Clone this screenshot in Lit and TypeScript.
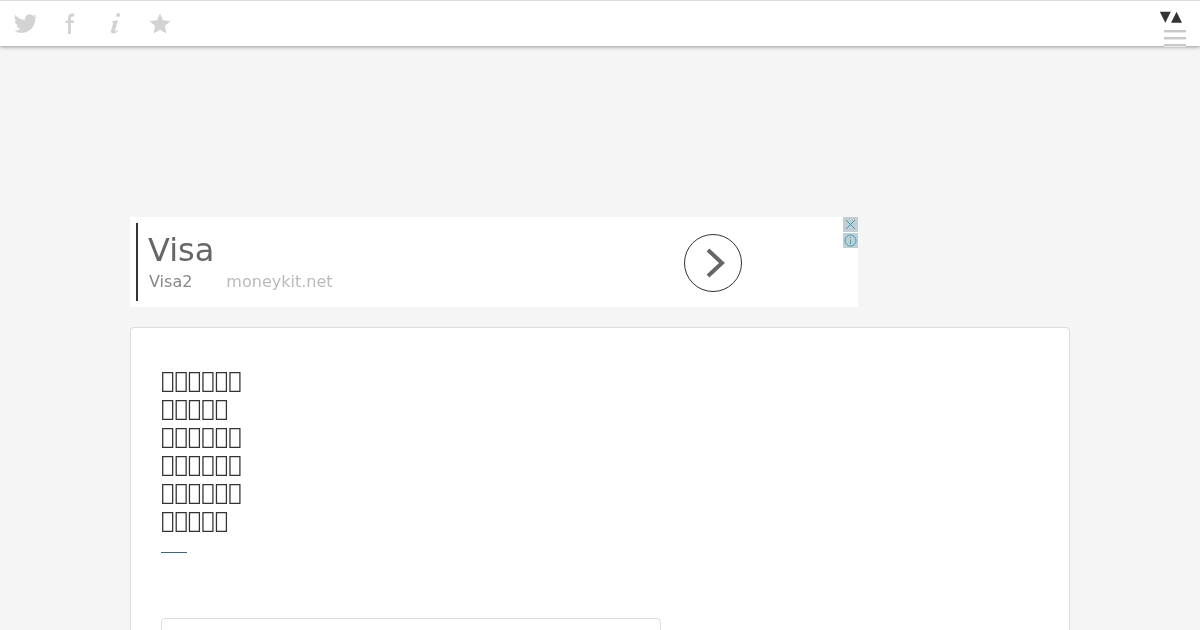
import {LitElement, html, css} from 'lit';
import {customElement} from 'lit/decorators.js';

// glyphs the font has no shape for, they draw as empty boxes like the reference
const TITLE_LINES = [
    '\uE100\uE101\uE102\uE103\uE104\uE105',
    '\uE106\uE107\uE108\uE109\uE10A',
    '\uE10B\uE10C\uE10D\uE10E\uE10F\uE110',
    '\uE111\uE112\uE113\uE114\uE115\uE116',
    '\uE117\uE118\uE119\uE11A\uE11B\uE11C',
    '\uE11D\uE11E\uE11F\uE120\uE121',
];

@customElement('app-root')
export class AppRoot extends LitElement {
    static styles = css`
        :host {
            display: block;
            height: 630px;
            overflow: hidden;
            background: #f5f5f5;
            font-family: "DejaVu Sans", sans-serif;
        }

        .topbar {
            height: 45px;
            background: #fff;
            border-top: 1px solid #ddd;
            box-shadow: 0 1px 4px rgba(0, 0, 0, 0.4);
            display: flex;
            justify-content: space-between;
            padding: 0 14px;
        }

        .social {
            display: flex;
            align-items: center;
            gap: 22px;
        }

        .social svg {
            width: 23px;
            height: 23px;
            fill: #d3d3d3;
            display: block;
        }

        .menu {
            width: 26px;
            display: flex;
            flex-direction: column;
            align-items: flex-end;
        }

        .arrows {
            font-size: 14.4px;
            line-height: 12px;
            margin-top: 9px;
            margin-right: 4px;
            color: #333;
            white-space: nowrap;
            filter: grayscale(1);
        }

        .burger {
            width: 22px;
            height: 2px;
            margin-top: 5px;
            background: #c8c8c8;
            box-shadow: 0 1px 0 #e8e8e8;
        }

        .burger.first {
            margin-top: 8px;
        }

        .page {
            width: 940px;
            margin: 171px auto 0;
        }

        .ad {
            position: relative;
            width: 716px;
            height: 78px;
            padding: 6px;
            background: #fff;
            display: flex;
            justify-content: space-between;
            align-items: center;
        }

        .ad-text {
            height: 78px;
            border-left: 2px solid #333;
            padding-left: 10px;
            box-sizing: border-box;
            filter: grayscale(1);
        }

        .ad-title {
            font-size: 32px;
            line-height: 38px;
            margin-top: 8px;
            color: #666;
        }

        .ad-sub {
            display: flex;
            gap: 34px;
            font-size: 16px;
            line-height: 20px;
            margin-top: 3px;
            margin-left: 1px;
            color: #888;
        }

        .ad-url {
            color: #bbb;
        }

        .ad-go {
            margin-right: 110px;
            margin-top: 2px;
            width: 56px;
            height: 56px;
            border: 1px solid #333;
            border-radius: 50%;
            display: flex;
            align-items: center;
            justify-content: center;
        }

        .ad-badges {
            position: absolute;
            top: 0;
            right: 0;
            display: flex;
            flex-direction: column;
            gap: 1px;
        }

        .ad-badges svg {
            width: 15px;
            height: 15px;
            display: block;
            background: #c3ced3;
        }

        .card {
            margin-top: 20px;
            height: 400px;
            box-sizing: border-box;
            background: #fff;
            border: 1px solid #ddd;
            border-radius: 4px;
            padding: 38px 30px 0;
        }

        .title {
            font-size: 22.4px;
            line-height: 28px;
            font-weight: normal;
            margin: 0;
            color: #333;
            filter: grayscale(1);
        }

        .rule {
            width: 26px;
            height: 1px;
            margin-top: 18px;
            background: #2b6a9e;
        }

        .box {
            width: 498px;
            height: 100px;
            margin-top: 65px;
            border: 1px solid #ddd;
            border-radius: 4px;
        }
    `;

    render() {
        return html`
        <div class="topbar">
            <div class="social">
                <svg viewBox="0 0 24 24"><path d="M23.600 4.600c-.9.4-1.800.6-2.800.8 1-.6 1.800-1.500 2.100-2.700-.9.6-2 1-3.100 1.200a4.900 4.900 0 0 0-8.300 4.500C7.500 8.200 3.900 6.200 1.500 3.200a4.900 4.900 0 0 0 1.500 6.500c-.8 0-1.600-.2-2.200-.6 0 2.400 1.700 4.400 3.900 4.900-.7.2-1.500.2-2.200.1.6 1.900 2.400 3.300 4.600 3.400A9.900 9.900 0 0 1 .4 19.500 14 14 0 0 0 22 7c1-.7 1.900-1.500 1.600-2.400z"/></svg>
                <svg viewBox="0 0 23 23"><path d="M13 1.500c1 0 1.800.1 2.400.3v2.900c-.6-.2-1.200-.3-1.800-.3-1.200 0-1.700.7-1.700 2v2h3v2.700h-3V22H9V11.100H6.500V8.400H9V6.400C9 3.200 10.400 1.500 13 1.500z"/></svg>
                <svg viewBox="0 0 23 23"><path d="M14.200 1a2 2 0 1 1 0 4 2 2 0 0 1 0-4zM8.500 9l5.400-.8-2.800 10.400c-.2.700.3.900.8.500l1.500-1.400.6.700c-1.300 1.900-3 3.100-4.900 3.100-1.700 0-2.400-1.100-2-2.900l2-7.300c.2-.7-.2-1-1-1.100z"/></svg>
                <svg viewBox="0 0 24 24"><path d="M11.500 1.500l3.200 7.200 7.800.8-5.900 5.200 1.700 7.700-6.800-4-6.800 4 1.700-7.700L.5 9.500l7.800-.8z"/></svg>
            </div>
            <div class="menu">
                <div class="arrows">▼▲</div>
                <div class="burger first"></div>
                <div class="burger"></div>
                <div class="burger"></div>
            </div>
        </div>
        <div class="page">
            <div class="ad">
                <div class="ad-text">
                    <div class="ad-title">Visa</div>
                    <div class="ad-sub"><span>Visa2</span><span class="ad-url">moneykit.net</span></div>
                </div>
                <div class="ad-go">
                    <svg width="24" height="32" viewBox="0 0 24 32"><path d="M7 3l14 13L7 29" fill="none" stroke="#666" stroke-width="4"/></svg>
                </div>
                <div class="ad-badges">
                    <svg viewBox="0 0 15 15"><path d="M3 3l9 9M12 3l-9 9" stroke="#2aa5c0" fill="none"/></svg>
                    <svg viewBox="0 0 15 15"><circle cx="7.500" cy="7.500" r="5.500" fill="none" stroke="#2aa5c0"/><path d="M7.500 4v1M7.500 6.500V11" stroke="#2aa5c0"/></svg>
                </div>
            </div>
            <div class="card">
                <h1 class="title">${TITLE_LINES.map(l => html`${l}<br>`)}</h1>
                <div class="rule"></div>
                <div class="box"></div>
            </div>
        </div>
        `;
    }
}
